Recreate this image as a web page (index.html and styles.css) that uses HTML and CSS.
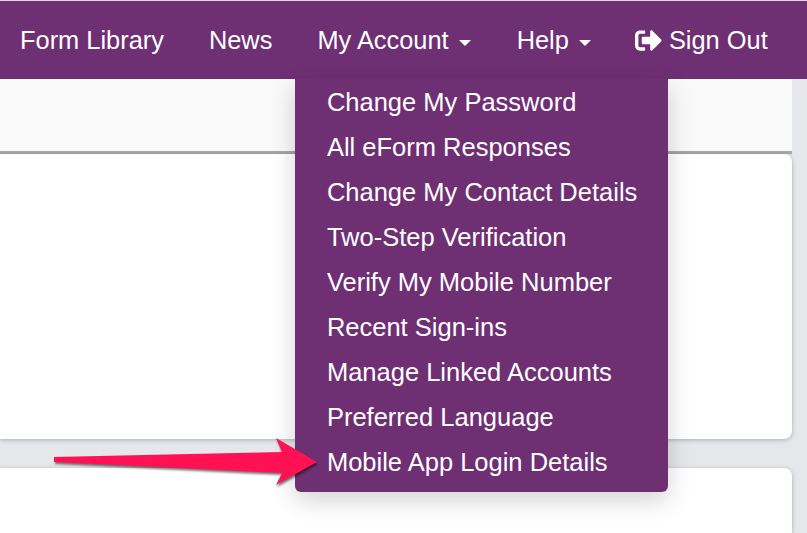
FILE: index.html
```html
<!DOCTYPE html>
<html lang="en">
<head>
  <meta charset="UTF-8" />
  <title>My Account</title>
  <link rel="stylesheet" href="styles.css">
</head>
<body>
  <nav class="navbar">
    <a class="nav-link" href="#">Form Library</a>
    <a class="nav-link" href="#">News</a>
    <div class="nav-item">
      <a class="nav-link" href="#">My Account<span class="caret"></span></a>
      <div class="dropdown">
        <a href="#">Change My Password</a>
        <a href="#">All eForm Responses</a>
        <a href="#">Change My Contact Details</a>
        <a href="#">Two-Step Verification</a>
        <a href="#">Verify My Mobile Number</a>
        <a href="#">Recent Sign-ins</a>
        <a href="#">Manage Linked Accounts</a>
        <a href="#">Preferred Language</a>
        <a href="#">Mobile App Login Details</a>
      </div>
    </div>
    <a class="nav-link" href="#">Help<span class="caret"></span></a>
    <a class="nav-link sign-out" href="#">
      <svg class="sign-out-icon" viewBox="0 0 512 512" width="27" height="27" fill="#fff"><path d="M497 273L329 441c-15 15-41 4.5-41-17v-96H152c-13.3 0-24-10.7-24-24v-96c0-13.3 10.7-24 24-24h136V88c0-21.4 25.9-32 41-17l168 168c9.3 9.4 9.3 24.6 0 34zM192 436v-40c0-6.6-5.4-12-12-12H96c-17.7 0-32-14.3-32-32V160c0-17.7 14.3-32 32-32h84c6.6 0 12-5.4 12-12V76c0-6.6-5.4-12-12-12H96c-53 0-96 43-96 96v192c0 53 43 96 96 96h84c6.6 0 12-5.4 12-12z"/></svg>
      <span>Sign Out</span>
    </a>
  </nav>

  <main class="content">
    <div class="subheader"></div>
    <div class="card card-tall"></div>
    <div class="card card-cut"></div>
  </main>

  <svg class="arrow" width="290" height="60" viewBox="0 0 290 60">
    <path d="M2 20 L230 15 L224 1 L265 25 L224 48 L230 36 L2 25 Z"/>
  </svg>
</body>
</html>
```

FILE: styles.css
```css
* {
  box-sizing: border-box;
}

html,
body {
  height: 100%;
}

body {
  margin: 0;
  overflow: hidden;
  background: #e5e7eb;
  font-family: "Liberation Sans", Arial, sans-serif;
  font-size: 25.4px;
  border-top: 1px solid #d8d8d8;
}

a {
  color: #fff;
  text-decoration: none;
}

.navbar {
  display: flex;
  align-items: center;
  height: 78px;
  padding-left: 20px;
  background: #6f2f73;
  gap: 45px;
}

.nav-item {
  position: relative;
  margin-right: 1px;
}

.nav-link {
  display: block;
  line-height: 28px;
  white-space: nowrap;
}

.caret {
  display: inline-block;
  margin-left: 10px;
  vertical-align: 3px;
  border-top: 6px solid #fff;
  border-left: 6px solid transparent;
  border-right: 6px solid transparent;
}

.sign-out {
  display: flex;
  align-items: center;
  gap: 7px;
  margin-left: -1px;
}

.dropdown {
  position: absolute;
  top: 53px;
  left: -22px;
  z-index: 2;
  display: flex;
  flex-direction: column;
  width: 373px;
  height: 413px;
  padding: 1px 0 0 31.5px;
  font-size: 25.5px;
  background: #6f2f73;
  border-radius: 0 0 6px 6px;
  box-shadow: 0 8px 24px rgba(0, 0, 0, 0.18);
}

.dropdown a {
  height: 45px;
  line-height: 45px;
  white-space: nowrap;
}

.content {
  width: 792px;
}

.subheader {
  height: 75px;
  background: #f9f9f9;
  border-bottom: 3px solid #a9a9a9;
}

.card {
  margin-top: 29px;
  background: #fff;
  border-radius: 0 8px 8px 0;
  box-shadow: 0 1px 4px rgba(0, 0, 0, 0.25);
}

.card-tall {
  height: 285px;
  margin-top: 0;
}

.card-cut {
  height: 65px;
  border-radius: 0 8px 0 0;
}

.arrow {
  position: absolute;
  top: 437px;
  left: 52px;
  z-index: 3;
  fill: #ff1154;
  filter: drop-shadow(1px 2px 1px rgba(0, 0, 0, 0.55));
}
```
